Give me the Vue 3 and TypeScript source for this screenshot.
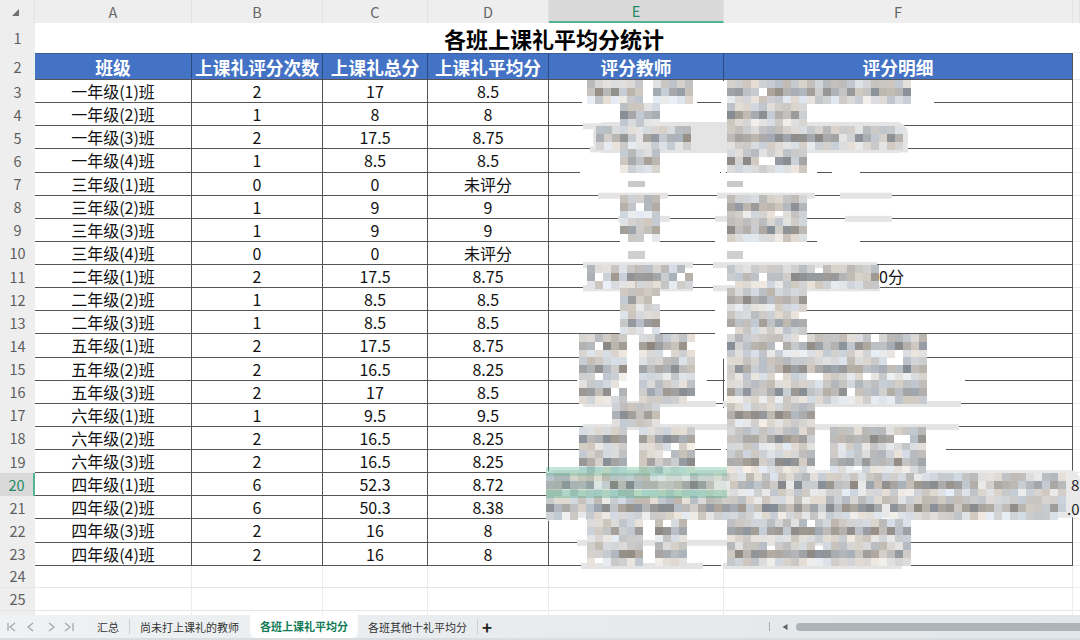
<script setup lang="ts">
// Spreadsheet view: class averages, with the teacher columns smudged out by a mosaic overlay.
type Row = { no: number; name: string; count: string; total: string; avg: string }

const classRows: [string, string, string, string][] = [
  ['一年级(1)班', '2', '17', '8.5'],
  ['一年级(2)班', '1', '8', '8'],
  ['一年级(3)班', '2', '17.5', '8.75'],
  ['一年级(4)班', '1', '8.5', '8.5'],
  ['三年级(1)班', '0', '0', '未评分'],
  ['三年级(2)班', '1', '9', '9'],
  ['三年级(3)班', '1', '9', '9'],
  ['三年级(4)班', '0', '0', '未评分'],
  ['二年级(1)班', '2', '17.5', '8.75'],
  ['二年级(2)班', '1', '8.5', '8.5'],
  ['二年级(3)班', '1', '8.5', '8.5'],
  ['五年级(1)班', '2', '17.5', '8.75'],
  ['五年级(2)班', '2', '16.5', '8.25'],
  ['五年级(3)班', '2', '17', '8.5'],
  ['六年级(1)班', '1', '9.5', '9.5'],
  ['六年级(2)班', '2', '16.5', '8.25'],
  ['六年级(3)班', '2', '16.5', '8.25'],
  ['四年级(1)班', '6', '52.3', '8.72'],
  ['四年级(2)班', '6', '50.3', '8.38'],
  ['四年级(3)班', '2', '16', '8'],
  ['四年级(4)班', '2', '16', '8'],
]
const rows: Row[] = classRows.map((r, i) => ({ no: i + 3, name: r[0], count: r[1], total: r[2], avg: r[3] }))
const columns = ['A', 'B', 'C', 'D', 'E', 'F', '']
const headers = ['班级', '上课礼评分次数', '上课礼总分', '上课礼平均分', '评分教师', '评分明细']
const tabs = ['汇总', '尚未打上课礼的教师', '各班上课礼平均分', '各班其他十礼平均分']

const ROW_H = 23.14
const rowMid = (n: number) => 80 + (n - 3) * ROW_H + 11.5
const rowLine = (n: number) => 80 + (n - 2) * ROW_H

// mosaic spans per sheet row: [row, x0, x1]
const spans: [number, number, number][] = [
  [3, 587, 637], [3, 653, 686], [3, 727, 908],
  [4, 620, 653], [4, 727, 800],
  [5, 596, 630], [5, 643, 686], [5, 727, 900],
  [6, 620, 653], [6, 727, 800],
  [8, 620, 653], [8, 727, 800],
  [9, 620, 653], [9, 727, 800],
  [11, 587, 637], [11, 637, 686], [11, 727, 877],
  [12, 620, 653], [12, 727, 800],
  [13, 620, 653], [13, 727, 800],
  [14, 579, 623], [14, 639, 695], [14, 727, 925],
  [15, 579, 623], [15, 639, 695], [15, 727, 925],
  [16, 579, 623], [16, 639, 695], [16, 727, 925],
  [17, 612, 660], [17, 727, 815],
  [18, 579, 623], [18, 639, 695], [18, 727, 815], [18, 830, 925],
  [19, 579, 623], [19, 639, 695], [19, 727, 815], [19, 830, 925],
  [20, 546, 1066],
  [21, 546, 1066],
  [22, 587, 640], [22, 655, 685], [22, 727, 905],
  [23, 587, 640], [23, 655, 685], [23, 727, 905],
]

// parts of each row's bottom border that were painted over: [row, x0, x1, smudged grey?]
const erased: [number, number, number, boolean][] = [
  [3, 582, 697, false], [3, 722, 934, false],
  [4, 583, 837, true],
  [5, 590, 908, true],
  [6, 580, 720, false], [6, 735, 817, false], [6, 832, 860, false],
  [7, 598, 668, true], [7, 717, 815, true], [7, 840, 892, true],
  [8, 618, 670, true], [8, 715, 802, true], [8, 845, 892, true],
  [9, 620, 653, false], [9, 715, 802, false], [9, 817, 860, false],
  [10, 583, 693, true], [10, 713, 877, true],
  [11, 583, 693, true], [11, 713, 880, true],
  [12, 620, 653, false], [12, 715, 800, false],
  [13, 620, 653, false], [13, 715, 800, false],
  [14, 579, 921, false],
  [15, 577, 707, false], [15, 725, 965, false],
  [16, 583, 716, true], [16, 723, 961, true],
  [17, 583, 959, true],
  [18, 583, 695, false], [18, 727, 946, false],
  [19, 546, 958, false], [19, 998, 1066, false],
  [20, 546, 1080, true],
  [21, 546, 1072, false],
  [22, 577, 911, true],
  [23, 581, 703, true], [23, 723, 902, true],
]

function seeded(seed: number) {
  let s = seed
  return () => {
    s = (s * 1664525 + 1013904223) % 4294967296
    return s / 4294967296
  }
}

type Cell = { x: number; y: number; fill: string }
const rand = seeded(20)
const cells: Cell[] = []
// three bands per text line: pale, dark (where the glyphs were), pale-ish
const bands = [
  { from: 182, spread: 45 },
  { from: 135, spread: 75 },
  { from: 195, spread: 45 },
]
for (const [n, x0, x1] of spans) {
  const top = rowMid(n) - 12
  bands.forEach((band, bandIdx) => {
    for (let x = x0; x < x1; x += 8) {
      if (rand() < 0.04) continue
      const g = Math.round(band.from + rand() * band.spread)
      const tint = rand() * 16 - 8 // warm or cool
      const r = Math.round(g + tint)
      const b = Math.round(g - tint * 1.2)
      cells.push({ x, y: Math.round(top + bandIdx * 8), fill: `rgb(${r},${g},${b})` })
    }
  })
}
const cellW = 8
const cellH = 8

const scrubs = erased.map(([n, x0, x1, grey]) => ({
  x: x0,
  y: rowLine(n) - (grey ? 3 : 2),
  w: x1 - x0,
  h: grey ? 6 : 3,
  fill: grey ? '#e4e4e4' : '#ffffff',
}))
</script>

<template>
  <div class="sheet">
    <div class="row col-head">
      <div class="corner">
        <svg width="10" height="10" viewBox="0 0 10 10"><path d="M9 2v7H2z" fill="#6f6f6f" /></svg>
      </div>
      <div v-for="c in columns" :key="c" class="col-label" :class="{ 'col-label--on': c === 'E' }">{{ c }}</div>
    </div>

    <div class="row title-row">
      <div class="row-no">1</div>
      <div class="title">各班上课礼平均分统计</div>
      <div class="spare"></div>
    </div>

    <div class="row head-row">
      <div class="row-no">2</div>
      <div v-for="h in headers" :key="h" class="head-cell">{{ h }}</div>
      <div class="spare"></div>
    </div>

    <div v-for="r in rows" :key="r.no" class="row data-row">
      <div class="row-no" :class="{ 'row-no--on': r.no === 20 }">{{ r.no }}</div>
      <div class="cell">{{ r.name }}</div>
      <div class="cell">{{ r.count }}</div>
      <div class="cell">{{ r.total }}</div>
      <div class="cell">{{ r.avg }}</div>
      <div class="cell"></div>
      <div class="cell cell--detail"><span v-if="r.no === 11" class="leftover">0分</span></div>
      <div class="spare"></div>
    </div>

    <div v-for="n in [24, 25, 26]" :key="n" class="row blank-row">
      <div class="row-no">{{ n }}</div>
      <div v-for="c in 6" :key="c" class="blank"></div>
      <div class="spare"></div>
    </div>

    <div class="tabbar">
      <div class="tab-nav">
        <svg width="74" height="12" viewBox="0 0 74 12" fill="none" stroke="#a4a9ad" stroke-width="1.3">
          <path d="M8 2v8M15 2l-5 4 5 4" />
          <path d="M33 2l-5 4 5 4" />
          <path d="M49 2l5 4-5 4" />
          <path d="M65 2l5 4-5 4M73 2v8" />
        </svg>
      </div>
      <template v-for="(t, i) in tabs" :key="t">
        <div class="tab" :class="{ 'tab--on': i === 2 }">{{ t }}</div>
        <div v-if="i !== 1 && i !== 2" class="tab-sep"></div>
      </template>
      <div class="tab-add">+</div>
      <div class="tab-fill"></div>
      <div class="tab-sep tab-sep--scroll"></div>
      <svg class="scroll-arrow" width="8" height="8" viewBox="0 0 8 8"><path d="M6.5 1v6L1.5 4z" fill="#5e6468" /></svg>
      <div class="scroll-thumb"></div>
    </div>

    <svg class="redaction" width="1080" height="640" viewBox="0 0 1080 640">
      <!-- selected cell, mostly painted over -->
      <rect x="548" y="474" width="175" height="24" fill="none" stroke="#1d8f62" stroke-width="2" />
      <!-- vertical E/F border only survives around rows 15-16 -->
      <rect x="721" y="81" width="5" height="276" fill="#fff" />
      <rect x="721" y="408" width="5" height="158" fill="#fff" />
      <rect v-for="(s, i) in scrubs" :key="i" :x="s.x" :y="s.y" :width="s.w" :height="s.h" :fill="s.fill" />
      <rect x="593" y="122" width="315" height="31" rx="12" fill="#e4e4e4" />
      <rect x="546" y="470" width="534" height="48" rx="10" fill="#e9e9e9" />
      <text class="scrap" x="1071" y="491">8</text>
      <text class="scrap" x="1067" y="515">.0</text>
      <rect x="628" y="181" width="17" height="6" fill="#c9c9c9" />
      <rect x="727" y="181" width="16" height="6" fill="#c9c9c9" />
      <rect x="628" y="251" width="17" height="8" fill="#cfcfcf" />
      <rect x="727" y="251" width="16" height="8" fill="#cfcfcf" />
      <g class="mosaic">
        <rect v-for="(c, i) in cells" :key="i" :x="c.x" :y="c.y" :width="cellW" :height="cellH" :fill="c.fill" />
      </g>
      <rect x="546" y="467" width="181" height="9" fill="#3cae82" opacity="0.3" />
      <rect x="546" y="476" width="181" height="14" fill="#3cae82" opacity="0.07" />
      <rect x="546" y="490" width="181" height="8" fill="#3cae82" opacity="0.34" />
    </svg>
  </div>
</template>

<style scoped>
.sheet {
  position: relative;
  width: 1080px;
  height: 640px;
  overflow: hidden;
  background: #fff;
  color: #111;
  font-family: "Noto Sans CJK SC", "Liberation Sans", sans-serif;
  font-size: 16px;
}
.row {
  display: grid;
  grid-template-columns: 35px 157px 131px 105px 121px 175px 349px 7px;
}
.col-head { height: 23px; background: #eee; line-height: 20px; }
.corner { display: flex; align-items: center; justify-content: center; border-right: 1px solid #e2e2e2; padding-right: 4px; box-sizing: border-box; }
.col-label {
  display: flex;
  align-items: center;
  justify-content: center;
  border-right: 1px solid #e2e2e2;
  color: #666;
  font-size: 14.5px;
}
.col-label--on {
  background: #d9d9d9;
  color: #1e8a63;
  border-bottom: 2px solid #52b592;
  box-sizing: border-box;
}
.row-no {
  display: flex;
  align-items: center;
  justify-content: center;
  background: #eee;
  color: #5e5e5e;
  font-size: 14.5px;
  line-height: 18px;
  box-sizing: border-box;
}
.row-no--on {
  background: #d9d9d9;
  color: #1e8a63;
  border-right: 2px solid #52b592;
}
.title-row { height: 30px; }
.title {
  grid-column: 2 / 8;
  display: flex;
  align-items: center;
  justify-content: center;
  font-size: 22px;
  font-weight: 700;
  color: #000;
  line-height: 26px;
  padding-bottom: 1px;
  box-sizing: border-box;
}
.head-row { height: 27px; }
.head-cell {
  display: flex;
  align-items: center;
  justify-content: center;
  background: #4472c4;
  color: #fff;
  font-size: 17.7px;
  font-weight: 700;
  line-height: 22px;
  white-space: nowrap;
  border-top: 1px solid #3b5f9e;
  border-bottom: 1px solid #555;
  border-right: 1px solid #2c4a7d;
  box-sizing: border-box;
}
.head-cell:nth-child(7) { border-right-color: #555; }
.data-row { height: 23.14px; }
.cell {
  display: flex;
  align-items: center;
  justify-content: center;
  line-height: 20px;
  border-right: 1px solid #555;
  border-bottom: 1px solid #555;
  box-sizing: border-box;
  white-space: nowrap;
}
.cell--detail { justify-content: flex-start; }
.leftover { margin-left: 155px; }
.spare { border-bottom: 1px solid #ececec; }
.blank-row { height: 22.6px; }
.blank { border-right: 1px solid #ececec; border-bottom: 1px solid #e6e6e6; box-sizing: border-box; }
.blank-row .row-no { border-bottom: 1px solid #e6e6e6; }

.tabbar {
  position: absolute;
  left: 0;
  right: 0;
  top: 615px;
  height: 25px;
  box-sizing: border-box;
  border-bottom: 2px solid #d9dddf;
  display: flex;
  align-items: center;
  background: linear-gradient(90deg, #eff1f2, #e1e6ea);
  color: #333;
  font-size: 11px;
}
.tab-nav { width: 87px; box-sizing: border-box; display: flex; align-items: center; }
.tab { padding: 0 10px; line-height: 22px; white-space: nowrap; }
.tab--on {
  align-self: flex-start;
  height: 23px;
  margin-left: 1px;
  background: #fff;
  color: #0f7b55;
  font-weight: 700;
  border-radius: 0 0 6px 6px;
}
.tab-sep { width: 1px; height: 15px; background: #ccd0d3; }
.tab-add { margin-left: 4px; font-size: 17px; font-weight: 700; color: #222; line-height: 22px; }
.tab-fill { flex: 1; }
.tab-sep--scroll { margin-right: 11px; background: #a9aeb2; height: 9px; }
.scroll-arrow { margin-right: 7px; }
.scroll-thumb { width: 284px; height: 8px; border-radius: 4px 0 0 4px; background: #aeb3b7; }

.redaction { position: absolute; left: 0; top: 0; pointer-events: none; }
.mosaic { filter: blur(0.5px); }
.scrap { font-size: 15px; fill: #222; }
</style>

<style>
html, body { margin: 0; overflow: hidden; background: #fff; }
</style>
